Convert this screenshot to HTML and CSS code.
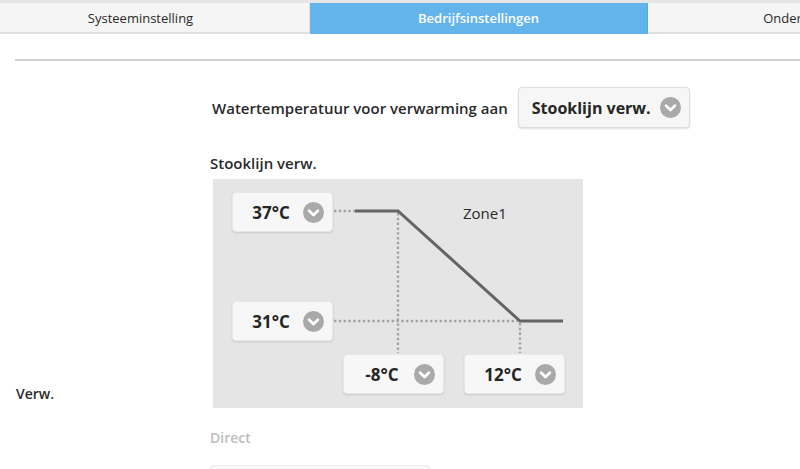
FILE: index.html
```html
<!DOCTYPE html>
<html lang="nl">

<head>
  <meta charset="UTF-8">
  <meta name="viewport" content="width=device-width, initial-scale=1.0">
  <title>Bedrijfsinstellingen</title>
  <link rel="stylesheet" href="styles.css">
</head>

<body>
  <!-- tabs -->
  <div class="tabs">
    <div class="tab">Systeeminstelling</div>
    <div class="tab active">Bedrijfsinstellingen</div>
    <div class="tab last">Onderhoudsmodus</div>
  </div>

  <div class="main">
    <div class="section">
      <div class="section-label">Verw.</div>

      <div class="section-body">
        <div class="row">
          <span class="row-label">Watertemperatuur voor verwarming aan</span>
          <div class="select wide">
            <span class="select-text">Stooklijn verw.</span>
            <svg class="chevron" viewBox="0 0 20 20"><circle cx="10" cy="10" r="10" /><path d="M5.8 8.3 L10 12.4 L14.2 8.3" /></svg>
          </div>
        </div>

        <h3 class="sub-title">Stooklijn verw.</h3>

        <!-- stooklijn grafiek -->
        <div class="chart">
          <svg class="chart-lines" viewBox="0 0 370 229">
            <path class="dots" d="M121 32 H142 M185 34 V174 M307 144 V174 M121 142 H305" />
            <path class="curve" d="M142 32 H185 L307 142 H350" />
          </svg>
          <span class="zone">Zone1</span>

          <div class="select point" style="left: 19px; top: 13px;">
            <span class="select-text">37°C</span>
            <svg class="chevron" viewBox="0 0 20 20"><circle cx="10" cy="10" r="10" /><path d="M5.8 8.3 L10 12.4 L14.2 8.3" /></svg>
          </div>
          <div class="select point" style="left: 19px; top: 122px;">
            <span class="select-text">31°C</span>
            <svg class="chevron" viewBox="0 0 20 20"><circle cx="10" cy="10" r="10" /><path d="M5.8 8.3 L10 12.4 L14.2 8.3" /></svg>
          </div>
          <div class="select point" style="left: 130px; top: 175px;">
            <span class="select-text">-8°C</span>
            <svg class="chevron" viewBox="0 0 20 20"><circle cx="10" cy="10" r="10" /><path d="M5.8 8.3 L10 12.4 L14.2 8.3" /></svg>
          </div>
          <div class="select point" style="left: 251px; top: 175px;">
            <span class="select-text">12°C</span>
            <svg class="chevron" viewBox="0 0 20 20"><circle cx="10" cy="10" r="10" /><path d="M5.8 8.3 L10 12.4 L14.2 8.3" /></svg>
          </div>
        </div>

        <h3 class="sub-title muted">Direct</h3>
        <div class="select blank"></div>
      </div>
    </div>
  </div>
</body>

</html>
```

FILE: styles.css
```css
body {
  margin: 0;
  padding: 0;
  font-family: "Open Sans", "Liberation Sans", sans-serif;
  color: #2a2a2a;
  background: #fff;
  overflow: hidden;
}

/* tabs */
.tabs {
  display: flex;
  border-top: 3px solid #e6e6e6;
  margin-left: -28px;
  width: 1100px;
}

.tab {
  flex: 0 0 338px;
  box-sizing: border-box;
  height: 31px;
  line-height: 30px;
  text-align: center;
  font-size: 13px;
  white-space: nowrap;
  background-color: #f5f5f5;
  border-right: 1px solid #e3e3e3;
  border-bottom: 2px solid #e0e0e0;
}

.tab.active {
  background-color: #64b4ec;
  border-right-color: #56a6dd;
  border-bottom-color: #64b4ec;
  color: #fff;
  font-weight: 600;
}

.tab.last {
  padding-left: 12px;
}

.main {
  margin: 25px 0 0 15px;
  border-top: 2px solid #d0d0d0;
}

.section {
  display: flex;
  min-height: 664px;
}

.section-label {
  width: 194px;
  padding-left: 1px;
  align-self: center;
  font-size: 14px;
  font-weight: 600;
}

.section-body {
  display: flex;
  flex-direction: column;
  align-items: flex-start;
}

.row {
  display: flex;
  align-items: center;
  gap: 10px;
  margin-top: 26px;
}

.row-label {
  font-size: 15px;
  font-weight: 600;
  padding-left: 2px;
}

/* selects */
.select {
  display: flex;
  align-items: center;
  box-sizing: border-box;
  white-space: nowrap;
  background-color: #f6f6f6;
  border: 1px solid #dedede;
  border-radius: 4px;
  box-shadow: 0 1px 2px rgba(0, 0, 0, 0.12);
  font-weight: 700;
  font-size: 16px;
  color: #262626;
}

.select.wide {
  height: 41px;
  width: 172px;
  padding: 0 8px 0 13px;
  gap: 9px;
}

.select.point {
  position: absolute;
  width: 101px;
  height: 40px;
  padding: 0 8px;
  font-size: 17px;
  background-color: #f7f7f7;
  border-color: #e8e8e8;
}

.select.point .select-text {
  flex: 1;
  text-align: center;
  margin-right: 2px;
}

.select.blank {
  width: 220px;
  height: 40px;
  margin-top: 16px;
  background-color: #fafafa;
  border-color: #ececec;
}

.chevron {
  width: 21px;
  height: 21px;
  flex: none;
}

.chevron circle {
  fill: #a9a9a9;
}

.chevron path {
  fill: none;
  stroke: #fff;
  stroke-width: 2.6;
  stroke-linecap: round;
  stroke-linejoin: round;
}

.sub-title {
  margin: 24px 0 0 0;
  font-size: 15px;
  font-weight: 600;
  line-height: 22px;
}

.sub-title.muted {
  margin-top: 19px;
  font-size: 14px;
  color: #bdbdbd;
}

/* grafiek */
.chart {
  position: relative;
  width: 370px;
  height: 229px;
  margin: 5px 0 0 3px;
  background-color: #e5e5e5;
}

.chart-lines {
  position: absolute;
  left: 0;
  top: 0;
  width: 370px;
  height: 229px;
}

.chart-lines .dots {
  fill: none;
  stroke: #a3a3a3;
  stroke-width: 2.4;
  stroke-dasharray: 2.4 2.4;
}

.chart-lines .curve {
  fill: none;
  stroke: #646464;
  stroke-width: 3;
}

.zone {
  position: absolute;
  left: 250px;
  top: 24px;
  font-size: 15px;
  color: #2a2a2a;
}
```
